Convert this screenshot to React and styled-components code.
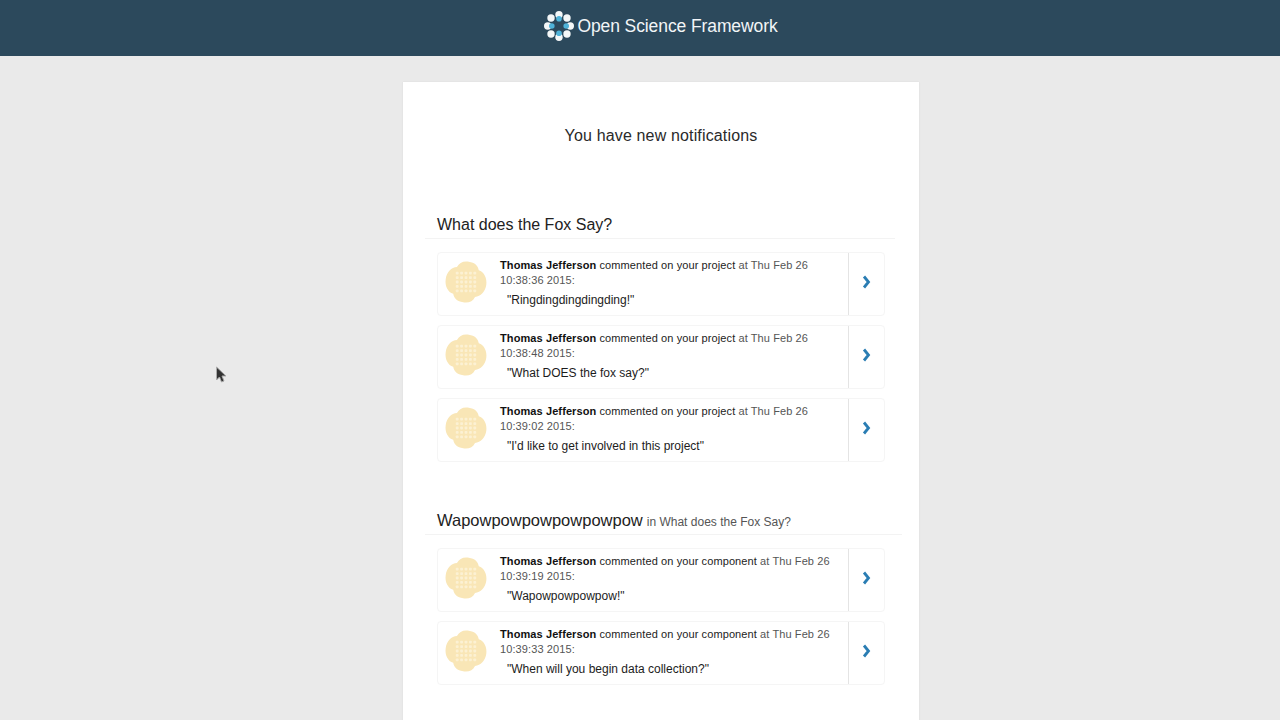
import React from 'react';
import styled, { createGlobalStyle } from 'styled-components';

const Global = createGlobalStyle`
  html, body { margin: 0; padding: 0; height: 720px; overflow: hidden; background: #eaeaea; }
  body { font-family: "Liberation Sans", Arial, sans-serif; color: #222; }
`;
const Page = styled.div`position: relative; height: 720px; overflow: hidden;`;
const Header = styled.header`
  height: 52px; padding: 0 0 4px 42px; background: #2c495c; display: flex; align-items: center; justify-content: center;
`;
const Brand = styled.div`display: flex; align-items: center; gap: 3px;`;
const BrandName = styled.span`font-size: 17.5px; color: #f2f5f7; letter-spacing: -0.1px;`;
const Card = styled.main`
  width: 516px; margin: 26px 0 0 403px; background: #fff; box-sizing: border-box;
  box-shadow: 0 0 2px rgba(0,0,0,.07); padding: 45px 22px 0; height: 700px;
`;
const Title = styled.h1`
  margin: 0 0 68px; text-align: center; font-size: 16px; font-weight: 400; line-height: 18px; color: #2a2a2a; letter-spacing: .15px;
`;
const Section = styled.section`margin-bottom: 46px;`;
const SectionHead = styled.div`
  padding: 0 12px ${p => p.$wide ? '0' : '1px'}; border-bottom: 1px solid #f3f3f3; line-height: 24px; margin-bottom: 13px;
  margin-right: ${p => p.$wide ? '-5px' : '2px'};
`;
const SectionTitle = styled.span`font-size: ${p => p.$wide ? '16.5px' : '16px'}; color: #222;`;
const SectionSub = styled.small`font-size: 12px; color: #555; margin-left: 4px;`;
const List = styled.div`display: flex; flex-direction: column; gap: 9px; padding-left: 12px; width: 448px;`;
const Row = styled.article`
  display: flex; height: 62px; border: 1px solid #f5f5f5; border-radius: 4px;
`;
const Avatar = styled.div`width: 62px; flex: none; padding: 0 7px 5px 0; box-sizing: border-box; display: flex; align-items: center; justify-content: center;`;
const Body = styled.div`
  flex: 1; padding-top: 5px; font-size: 11px; line-height: 15px; color: #555; letter-spacing: 0.1px;
`;
const Strong = styled.b`color: #111;`;
const Dark = styled.span`color: #222;`;
const Quote = styled.div`font-size: 12px; color: #1c1c1c; padding-left: 7px; margin-top: 5px; letter-spacing: 0;`;
const Go = styled.div`
  width: 36px; flex: none; box-sizing: border-box; padding-bottom: 5px; border-left: 1px solid #e4e4e4; display: flex; align-items: center; justify-content: center;
`;
const Pointer = styled.svg`position: absolute; left: 215px; top: 366px;`;

const Logo = () => {
  const spots = Array.from({ length: 8 }, (_, i) => {
    const a = (i * Math.PI) / 4 - Math.PI / 2;
    return { x: 15 + 11.3 * Math.cos(a), y: 15 + 11.3 * Math.sin(a), i };
  });
  return (
    <svg width="30" height="30" viewBox="0 0 30 30" aria-hidden="true">
      {spots.map(s => <circle key={s.i} cx={s.x} cy={s.y} r="3.7" fill="#f4f7f8" />)}
      {spots.filter(s => s.i % 2 === 0).map(s => (
        <circle key={s.i} cx={15 + 7.2 * Math.cos((s.i * Math.PI) / 4 - Math.PI / 2)} cy={15 + 7.2 * Math.sin((s.i * Math.PI) / 4 - Math.PI / 2)} r="2.8" fill="#4fb3d9" />
      ))}
    </svg>
  );
};

const Blob = () => {
  const dots = [];
  for (let r = 0; r < 5; r++) for (let c = 0; c < 5; c++) dots.push([13.2 + c * 4.4, 13.2 + r * 4.4]);
  return (
    <svg width="44" height="44" viewBox="0 0 44 44" aria-hidden="true">
      <path fill="#f9e6b6" transform="rotate(8 22 22)" d="M22 1.500C28 1.500 31.500 4 33 8.500 38.500 9.500 42.500 15 42.500 22S38.500 34.500 33 35.500C31.500 40 28 42.500 22 42.500S12.500 40 11 35.500C5.500 34.500 1.500 29 1.500 22S5.500 9.500 11 8.500C12.500 4 16 1.500 22 1.500Z" />
      {dots.map(([x, y]) => <rect key={`${x}-${y}`} x={x - 1.4} y={y - 1.4} width="2.800" height="2.800" rx=".8" fill="#fcf1d3" />)}
    </svg>
  );
};

const Chevron = () => (
  <svg width="9" height="14" viewBox="0 0 9 14" aria-hidden="true">
    <path d="M2 1.500 6.500 7 2 12.500" fill="none" stroke="#2a7db3" strokeWidth="2.800" />
  </svg>
);

const sections = [
  {
    title: 'What does the Fox Say?', kind: 'project',
    items: [
      ['10:38:36', 'Ringdingdingdingding!'],
      ['10:38:48', 'What DOES the fox say?'],
      ['10:39:02', "I'd like to get involved in this project"],
    ],
  },
  {
    title: 'Wapowpowpowpowpowpow', sub: 'in What does the Fox Say?', kind: 'component',
    items: [
      ['10:39:19', 'Wapowpowpowpow!'],
      ['10:39:33', 'When will you begin data collection?'],
    ],
  },
];

export default function App() {
  return (
    <Page>
      <Global />
      <Header>
        <Brand><Logo /><BrandName>Open Science Framework</BrandName></Brand>
      </Header>
      <Card>
        <Title>You have new notifications</Title>
        {sections.map(s => (
          <Section key={s.title}>
            <SectionHead $wide={!!s.sub}>
              <SectionTitle $wide={!!s.sub}>{s.title}</SectionTitle>
              {s.sub && <SectionSub>{s.sub}</SectionSub>}
            </SectionHead>
            <List>
              {s.items.map(([time, text]) => (
                <Row key={time}>
                  <Avatar><Blob /></Avatar>
                  <Body>
                    <Strong>Thomas Jefferson</Strong> <Dark>commented on your {s.kind}</Dark> at Thu Feb 26 {time} 2015:
                    <Quote>"{text}"</Quote>
                  </Body>
                  <Go><Chevron /></Go>
                </Row>
              ))}
            </List>
          </Section>
        ))}
      </Card>
      <Pointer width="12" height="18" viewBox="0 0 12 18" aria-hidden="true">
        <path d="M1.500 1v13l3-3 2 5 2.500-1-2-5h4z" fill="#333" stroke="#aaa" strokeWidth="1" />
      </Pointer>
    </Page>
  );
}
